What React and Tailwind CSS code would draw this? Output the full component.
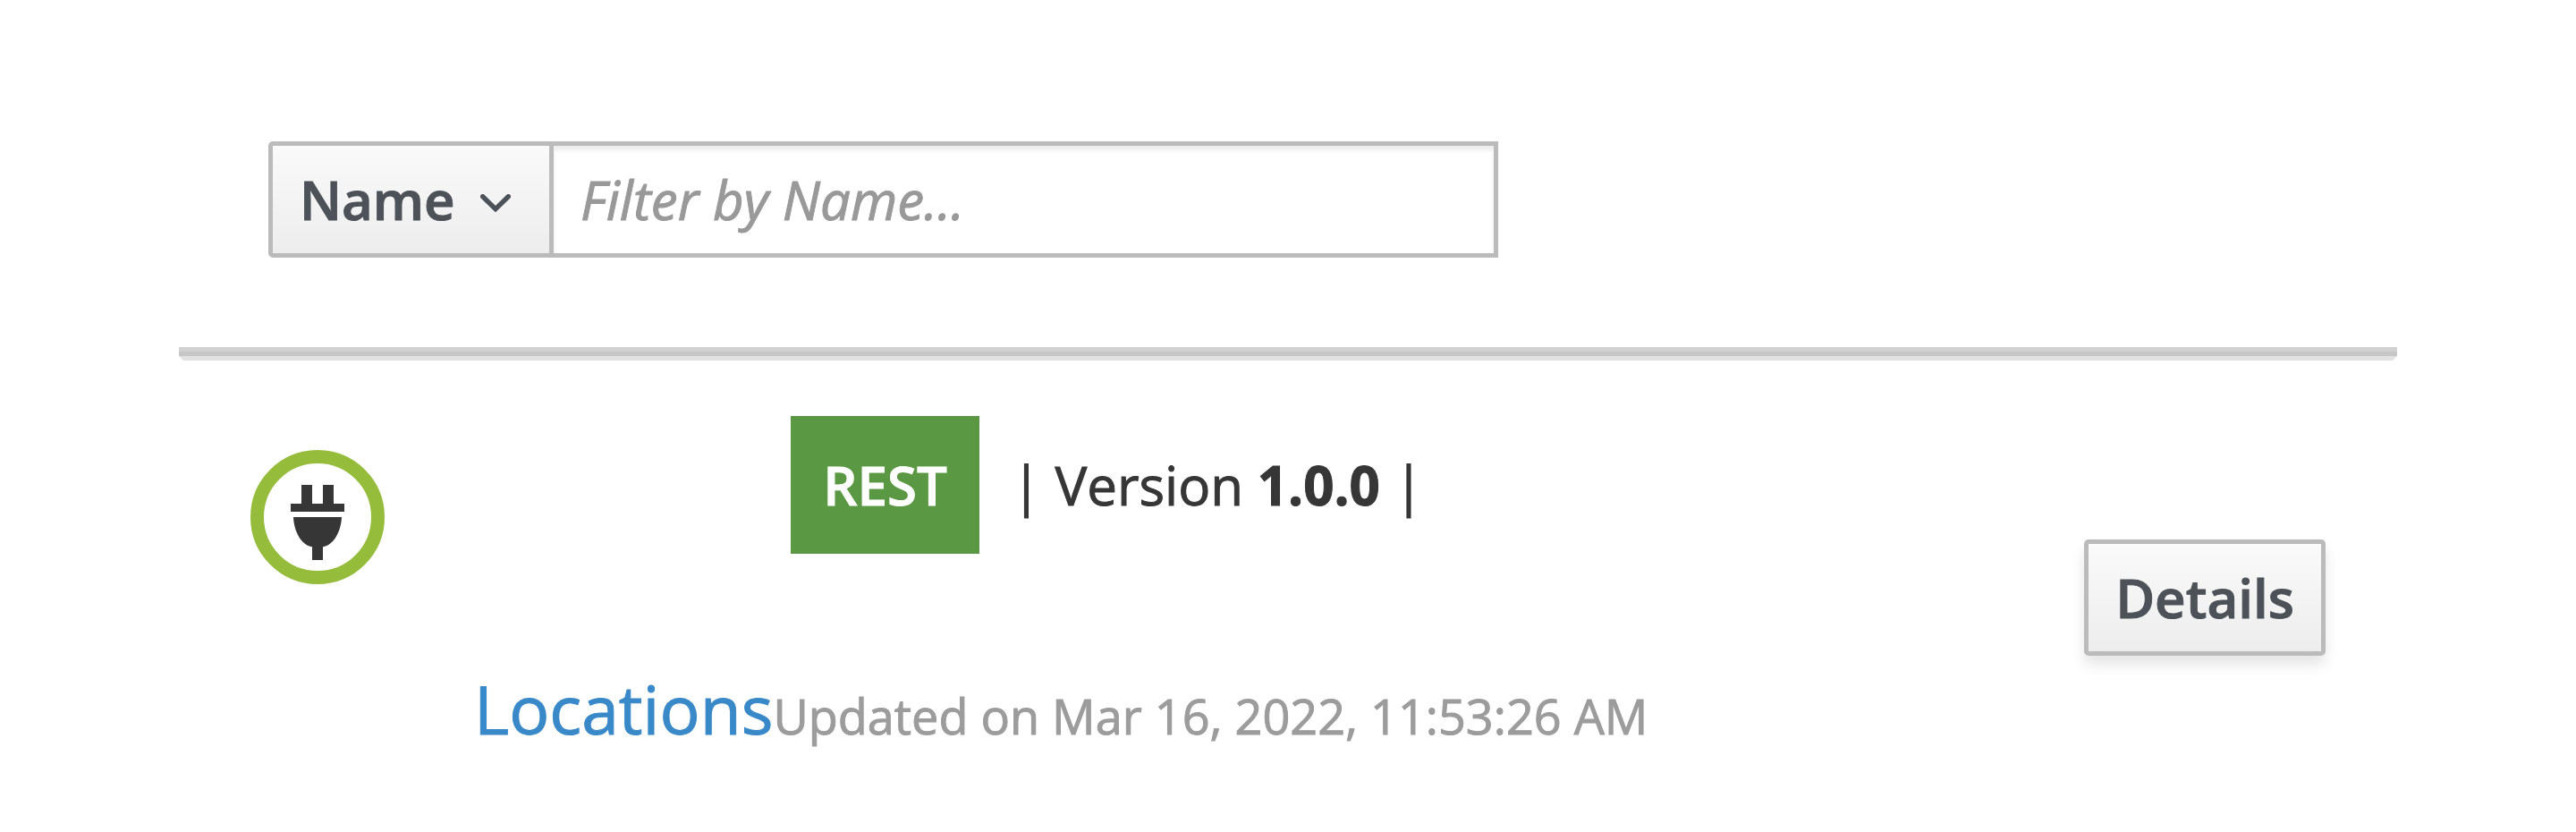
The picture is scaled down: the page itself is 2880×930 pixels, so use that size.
function PlugIcon() {
  return (
    <svg viewBox="0 0 120 120" className="size-[120px]" fill="#363636" aria-hidden="true">
      <path d="M42 24h12v21h12V24h12v21h12v9H30v-9h12z" />
      <path d="M33 60h54c-.6 16-9 31.500-21 33.300V108H54V93.300C42 91.500 33.600 76 33 60z" />
    </svg>
  );
}

function ChevronDown() {
  return (
    <svg
      viewBox="0 0 34 20"
      className="h-5 w-[34px]"
      fill="none"
      stroke="#4d5258"
      strokeWidth="5.400"
      strokeLinecap="round"
      aria-hidden="true"
    >
      <path d="M2.700 2.700 17 16.600 31.300 2.700" strokeLinejoin="miter" />
    </svg>
  );
}

function Toolbar() {
  return (
    <div className="ml-[100px] flex h-[130px] w-[1375px]">
      <button className="flex w-[319px] shrink-0 items-center rounded-l-[5px] border-[5px] border-[#bbb] bg-linear-to-b from-[#fafafa] to-[#ededed] pl-[30px] font-semibold text-[#4d5258]">
        Name
        <span className="ml-[28px] flex pt-2">
          <ChevronDown />
        </span>
      </button>
      <input
        placeholder="Filter by Name..."
        className="min-w-0 flex-1 border-[5px] border-l-0 border-[#bbb] bg-white px-[30px] shadow-[inset_0_5px_5px_rgba(3,3,3,0.075)] outline-none placeholder:text-[#999] placeholder:italic"
      />
    </div>
  );
}

function ApiRow() {
  return (
    <div className="flex pl-20">
      <div className="mt-[100px] flex size-[150px] shrink-0 items-center justify-center rounded-full border-[15px] border-[#96bc3c]">
        <PlugIcon />
      </div>
      <div className="ml-[100px] flex flex-col">
        <div className="mt-[62px] ml-[354px] flex h-[154px] items-center text-[#363636]">
          <span className="flex h-full w-[211px] items-center justify-center bg-[#5a9844] pb-px font-semibold text-white">
            REST
          </span>
          <span className="ml-[36px] whitespace-pre pb-px">
            | Version <b className="font-bold">1.0.0</b> |
          </span>
        </div>
        <div className="mt-[123px] flex items-baseline whitespace-nowrap">
          <a className="text-[75px] leading-[100px] text-[#3989c9]">Locations</a>
          <span className="text-[54px] leading-[80px] text-[#9c9c9c]">
            Updated on Mar 16, 2022, 11:53:26 AM
          </span>
        </div>
      </div>
      <button className="mt-[200px] mr-20 ml-auto h-[130px] w-[270px] rounded-[5px] border-[5px] border-[#bbb] bg-linear-to-b from-[#fafafa] to-[#ededed] font-semibold text-[#4d5258] shadow-[0_10px_15px_rgba(3,3,3,0.1)]">
        Details
      </button>
    </div>
  );
}

export default function App() {
  return (
    <main className="h-[930px] w-[2880px] overflow-hidden bg-white px-[200px] pt-[158px] font-['Open_Sans',sans-serif] text-[60px] leading-[100px] [-webkit-text-stroke-width:1px]">
      <Toolbar />
      <div className="mt-[100px]">
        <div className="h-[5px] bg-[#d1d1d1]" />
        <div className="h-[5px] bg-[#c7c7c7]" />
        <div className="h-[5px] border-x-[5px] border-t-[5px] border-x-transparent border-t-[#e2e2e2]" />
      </div>
      <ApiRow />
    </main>
  );
}
